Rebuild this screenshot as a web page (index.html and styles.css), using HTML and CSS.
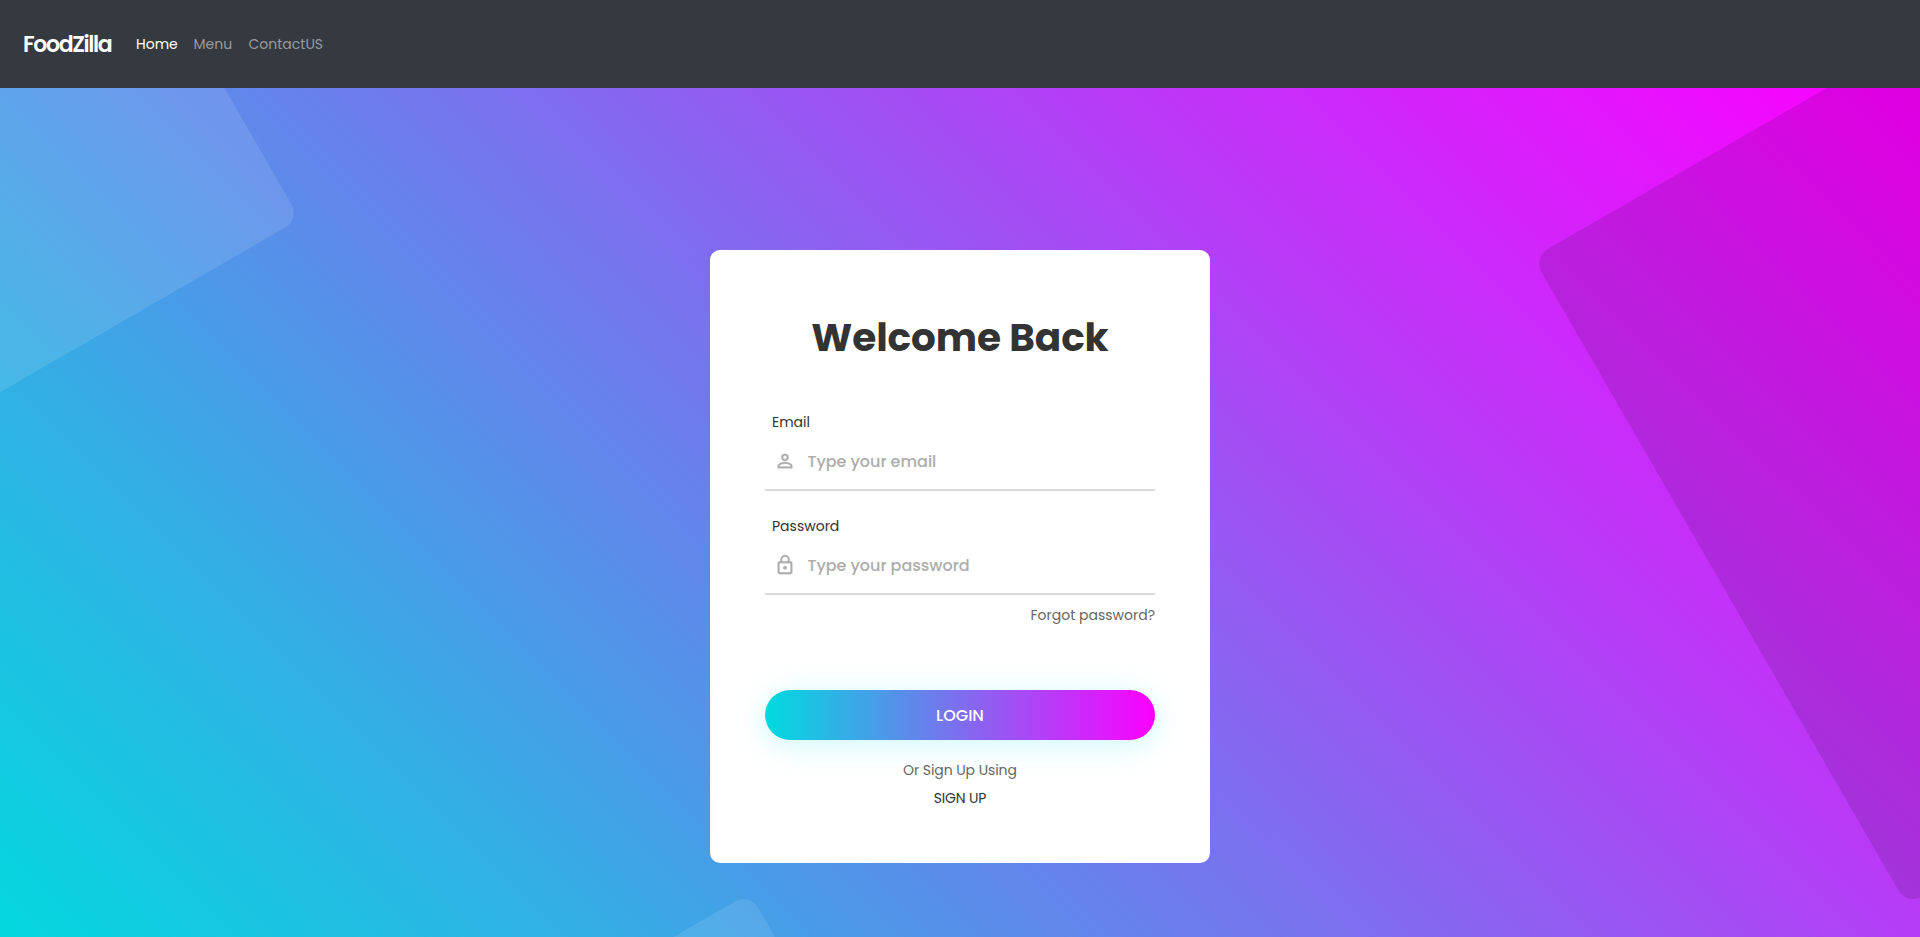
FILE: index.html
```html
<!DOCTYPE html>
<html lang="en">
<head>
<meta charset="utf-8">
<title>FoodZilla</title>
<link rel="stylesheet" href="styles.css">
</head>
<body>
<nav class="navbar">
  <a class="brand" href="#">FoodZilla</a>
  <a class="nav-link nav-home" href="#">Home</a>
  <a class="nav-link nav-menu" href="#">Menu</a>
  <a class="nav-link nav-contact" href="#">ContactUS</a>
</nav>
<main class="hero">
  <svg class="shapes" viewBox="0 0 1920 849" preserveAspectRatio="none" aria-hidden="true">
    <rect x="-600" y="-600" width="600" height="600" rx="17" fill="#fff" fill-opacity=".11" transform="translate(300 131) rotate(-30)"/>
    <rect width="748" height="748" rx="17" fill="#000" fill-opacity=".115" transform="translate(1533 169.5) rotate(-30)"/>
    <rect x="-400" width="400" height="400" rx="17" fill="#fff" fill-opacity=".1" transform="translate(749.6 805) rotate(-30)"/>
  </svg>
  <form class="card">
    <h1 class="title">Welcome Back</h1>
    <div class="field">
      <label class="label label-email" for="email">Email</label>
      <div class="control">
        <svg class="icon" viewBox="0 0 24 24"><path d="M12 5.9a2.1 2.1 0 1 1 0 4.2 2.1 2.1 0 0 1 0-4.2m0 9c2.97 0 6.1 1.46 6.1 2.1v1.1H5.9V17c0-.64 3.13-2.1 6.1-2.1M12 4a4 4 0 1 0 0 8 4 4 0 0 0 0-8zm0 9c-2.67 0-8 1.34-8 4v3h16v-3c0-2.66-5.33-4-8-4z"/></svg>
        <input class="input input-email" id="email" type="text" placeholder="Type your email">
      </div>
    </div>
    <div class="field">
      <label class="label label-password" for="password">Password</label>
      <div class="control">
        <svg class="icon" viewBox="0 0 24 24"><path d="M12 17a2 2 0 1 0 0-4 2 2 0 0 0 0 4zm6-9h-1V6A5 5 0 0 0 7 6v2H6a2 2 0 0 0-2 2v10a2 2 0 0 0 2 2h12a2 2 0 0 0 2-2V10a2 2 0 0 0-2-2zM8.9 6a3.1 3.1 0 0 1 6.2 0v2H8.9V6zM18 20H6V10h12v10z"/></svg>
        <input class="input input-password" id="password" type="password" placeholder="Type your password">
      </div>
    </div>
    <a class="forgot" href="#">Forgot password?</a>
    <button class="login" type="button"><span class="login-text">LOGIN</span></button>
    <p class="or">Or Sign Up Using</p>
    <a class="signup" href="#">SIGN UP</a>
  </form>
</main>
</body>
</html>
```
FILE: styles.css
```css
* { box-sizing: border-box; margin: 0; padding: 0; }
body {
  height: 937px;
  overflow: hidden;
  font-family: Poppins, Inter, "Open Sans", sans-serif;
  font-size: 14px;
}
a { text-decoration: none; }
.navbar {
  display: flex;
  align-items: center;
  height: 88px;
  padding-left: 23px;
  background: #343a40;
}
.brand { width: 113px; font-size: 22px; font-weight: 600; letter-spacing: -1.35px; color: #fff; }
.nav-link { color: #999c9f; }
.nav-home { width: 57.5px; color: #fff; }
.nav-menu { width: 55px; }
.hero {
  position: relative;
  display: flex;
  justify-content: center;
  align-items: flex-start;
  height: 849px;
  padding-top: 162px;
  background: linear-gradient(45deg, #03d8de, #36ace5 22.5%, #7179ed 45%, #b43ef6 69%, #d125fa 80.5%, #fc00ff 99%);
}
.shapes { position: absolute; inset: 0; width: 100%; height: 100%; }
.card {
  position: relative;
  display: flex;
  flex-direction: column;
  width: 500px;
  height: 613px;
  padding: 65px 55px 0;
  border-radius: 10px;
  background: #fff;
}
.title {
  height: 95px;
  line-height: 46px;
  font-size: 39px;
  font-weight: 700;
  letter-spacing: -0.1px;
  text-align: center;
  color: #333;
}
.field { height: 81px; border-bottom: 2px solid #d9d9d9; }
.field + .field { margin-top: 23px; }
.label { display: block; padding-left: 7px; line-height: 24px; color: #333; }
.control { display: flex; align-items: center; height: 55px; padding-left: 9px; }
.icon {
  width: 22px;
  height: 22px;
  margin-top: -2px;
  fill: #adadad;
  stroke: #adadad;
  stroke-width: .3;
}
.input {
  flex: 1;
  min-width: 0;
  height: 55px;
  margin-left: 11.5px;
  padding-bottom: 1px;
  border: 0;
  outline: 0;
  background: transparent;
  font: 500 16px Poppins, Inter, sans-serif;
  letter-spacing: -0.03px;
}
.input::placeholder { color: #adadad; opacity: 1; }
.forgot { align-self: flex-end; margin-top: 8px; line-height: 24px; color: #666; }
.login {
  height: 50px;
  margin-top: 63px;
  border: 0;
  border-radius: 25px;
  background: linear-gradient(90deg, #00dbde, #fc00ff);
  box-shadow: 0 5px 30px rgba(3, 216, 222, .2);
  font: 500 16px Poppins, Inter, sans-serif;
  color: #fff;
}
.or { margin-top: 18px; line-height: 24px; letter-spacing: -0.08px; text-align: center; color: #666; }
.signup { margin-top: 4px; line-height: 24px; letter-spacing: -0.2px; text-align: center; color: #333; }
```
